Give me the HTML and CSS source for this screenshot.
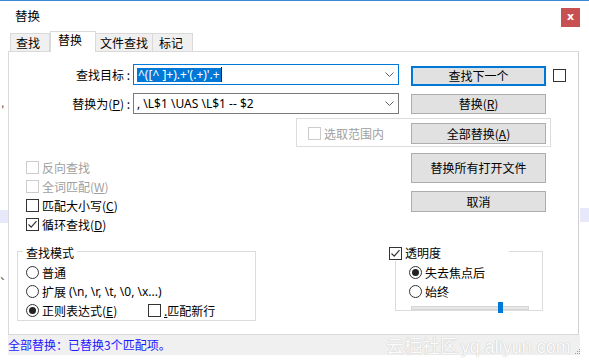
FILE: index.html
```html
<!DOCTYPE html>
<html>
<head>
<meta charset="utf-8">
<title>替换</title>
<link rel="stylesheet" href="styles.css">
</head>
<body>
<div class="bleed comma">,</div>
<div class="bleed dun">、</div>
<div class="bleed hl-left"></div>
<div class="bleed hl-right"></div>

<div class="titlebar">
  <span class="title">替换</span>
  <span class="close">x</span>
</div>

<div class="tabs">
  <div class="tab t1">查找</div>
  <div class="tab t2 active">替换</div>
  <div class="tab t3">文件查找</div>
  <div class="tab t4">标记</div>
</div>

<div class="panel">
  <div class="row r1">
    <label class="lbl">查找目标 :</label>
    <div class="combo focus">
      <span class="sel">^([^ ]+).+'(.+)'.+</span><span class="caret"></span>
      <svg class="chev" width="9" height="5" viewBox="0 0 9 5"><path d="M0.5 0.5 L4.5 4.5 L8.5 0.5" fill="none" stroke="#606060" stroke-width="1"/></svg>
    </div>
    <button class="btn default">查找下一个</button>
    <span class="box cb-right"></span>
  </div>

  <div class="row r2">
    <label class="lbl">替换为(<u>P</u>) :</label>
    <div class="combo">
      <span class="val">, \L$1 \UAS \L$1 -- $2</span>
      <svg class="chev" width="9" height="5" viewBox="0 0 9 5"><path d="M0.5 0.5 L4.5 4.5 L8.5 0.5" fill="none" stroke="#606060" stroke-width="1"/></svg>
    </div>
    <button class="btn">替换(<u>R</u>)</button>
  </div>

  <div class="scope">
    <span class="check disabled"><span class="box"></span>选取范围内</span>
    <button class="btn">全部替换(<u>A</u>)</button>
  </div>

  <div class="middle">
    <div class="opts">
      <div class="check disabled"><span class="box"></span>反向查找</div>
      <div class="check disabled"><span class="box"></span>全词匹配(<u>W</u>)</div>
      <div class="check"><span class="box"></span>匹配大小写(<u>C</u>)</div>
      <div class="check"><span class="box"><svg width="11" height="11" viewBox="0 0 11 11"><path d="M1.5 5.5 L4.2 8.2 L9.5 2.2" fill="none" stroke="#333" stroke-width="1.2"/></svg></span>循环查找(<u>D</u>)</div>
    </div>
    <div class="btns">
      <button class="btn tall">替换所有打开文件</button>
      <button class="btn cancel">取消</button>
    </div>
  </div>

  <div class="bottom">
    <fieldset class="mode">
      <legend>查找模式</legend>
      <div class="radio"><span class="circle"></span>普通</div>
      <div class="radio"><span class="circle"></span>扩展 <span class="lat">(\n, \r, \t, \0, \x...)</span></div>
      <div class="radio-row">
        <div class="radio re"><span class="circle on"></span>正则表达式(<u>E</u>)</div>
        <div class="check"><span class="box"></span><u>.</u> 匹配新行</div>
      </div>
    </fieldset>
    <fieldset class="trans">
      <legend><span class="check"><span class="box"><svg width="11" height="11" viewBox="0 0 11 11"><path d="M1.5 5.5 L4.2 8.2 L9.5 2.2" fill="none" stroke="#333" stroke-width="1.2"/></svg></span>透明度</span></legend>
      <div class="inner">
        <div class="radio"><span class="circle on"></span>失去焦点后</div>
        <div class="radio"><span class="circle"></span>始终</div>
        <div class="slider"><span class="thumb"></span></div>
      </div>
    </fieldset>
  </div>
</div>

<div class="status">全部替换：已替换3个匹配项。</div>

<div class="watermark"><span class="wm-cjk">云栖社区</span> <span class="wm-lat">yq.aliyun.com</span></div>
<svg class="grip" width="6" height="6" viewBox="0 0 6 6">
  <rect x="4" y="0" width="1" height="1" fill="#999"/>
  <rect x="2" y="2" width="1" height="1" fill="#999"/>
  <rect x="4" y="2" width="1" height="1" fill="#999"/>
  <rect x="0" y="4" width="1" height="1" fill="#999"/>
  <rect x="2" y="4" width="1" height="1" fill="#999"/>
  <rect x="4" y="4" width="1" height="1" fill="#999"/>
</svg>
</body>
</html>
```

FILE: styles.css
```css
* { box-sizing: border-box; }
html, body { margin: 0; padding: 0; }
body {
  width: 589px;
  height: 364px;
  background: #fff;
  font-family: "Noto Sans CJK SC", "Noto Sans", sans-serif;
  font-size: 12px;
  color: #000;
  position: relative;
  overflow: hidden;
}
u { text-decoration: underline; text-underline-offset: 1px; }

/* background bleed from window behind */
.bleed { position: absolute; }
.comma { left: 1px; top: 96px; font: 12px/14px "Liberation Sans", sans-serif; color: #444; }
.dun { left: 0px; top: 268px; font: 12px/14px "Noto Sans CJK SC", sans-serif; color: #666; }
.hl-left { left: 0; top: 210px; width: 8px; height: 13px; background: #e8e8fb; }
.hl-right { left: 580px; top: 208px; width: 9px; height: 14px; background: #e8e8fb; }

/* title */
.titlebar {
  height: 31px;
  border-top: 1px solid #3c87d6;
  display: flex;
  align-items: flex-start;
}
.title { margin: 7px 0 0 15px; line-height: 16px; font-size: 12.5px; }
.close {
  margin: 7px 9px 0 auto;
  width: 19px;
  height: 19px;
  background: #c75050;
  color: #fff;
  font: bold 11px/17px "DejaVu Sans", sans-serif;
  text-align: center;
}

/* tabs */
.tabs {
  display: flex;
  align-items: flex-end;
  height: 21px;
  margin-left: 10px;
  margin-bottom: -1px;
  position: relative;
  z-index: 1;
}
.tab {
  height: 18px;
  margin-bottom: 1px;
  padding-left: 5px;
  border: 1px solid #d9d9d9;
  border-bottom: none;
  background: #f0f0f0;
  line-height: 17px;
  white-space: nowrap;
}
.tab + .tab { border-left: none; }
.t1 { width: 40px; }
.t2 { width: 46px; }
.t3 { width: 57px; padding-left: 4px; }
.t4 { width: 40px; padding-left: 6px; }
.tab.active {
  height: 21px;
  margin-bottom: 0;
  background: #fff;
  border-left: 1px solid #d9d9d9;
  padding-left: 7px;
  line-height: 16px;
}
.tab.active + .tab { border-left: none; }

/* panel */
.panel {
  margin-left: 8px;
  width: 571px;
  height: 284px;
  border: 1px solid #d9d9d9;
  border-right-color: #d0d0d0;
  padding-top: 12px;
}
.row { display: flex; align-items: flex-start; height: 21px; }
.r2 { margin-top: 8px; }
.lbl {
  width: 121px;
  text-align: right;
  line-height: 21px;
  white-space: nowrap;
}
.combo {
  margin-left: 3px;
  width: 266px;
  height: 21px;
  border: 1px solid #7a7a7a;
  display: flex;
  align-items: center;
  padding-left: 3px;
  font-family: "Noto Sans", "Noto Sans CJK SC", sans-serif;
  font-size: 12px;
}
.combo.focus { border-color: #0078d7; }
.sel {
  background: #0078d7;
  color: #fff;
  line-height: 14px;
  height: 14px;
  padding: 0 1px;
  white-space: pre;
}
.caret { width: 1px; height: 15px; background: #222; }
.val { white-space: pre; line-height: 14px; }
.chev { margin-left: auto; margin-right: 4px; }

.btn {
  margin: 1px 0 0 12px;
  width: 135px;
  height: 20px;
  padding: 0;
  border: 1px solid #adadad;
  background: #e1e1e1;
  font-family: "Noto Sans CJK SC", "Noto Sans", sans-serif;
  font-size: 12px;
  line-height: 16px;
  color: #000;
  text-align: center;
}
.btn.default { border: 2px solid #0078d7; margin-top: 2px; }
.box {
  width: 13px;
  height: 13px;
  border: 1px solid #333;
  background: #fff;
  display: inline-flex;
  align-items: center;
  justify-content: center;
  flex: none;
}
.cb-right { margin: 5px 0 0 7px; }

/* scope group */
.scope {
  margin: 4px 0 0 287px;
  width: 255px;
  height: 29px;
  border: 1px solid #dcdcdc;
  display: flex;
  align-items: flex-start;
  padding-top: 4px;
}
.scope .check { margin-left: 11px; height: 21px; }
.scope .btn { margin: 0 4px 0 auto; height: 21px; }

.check { display: flex; align-items: center; height: 19px; white-space: nowrap; }
.check .box { margin-right: 3px; }
.check.disabled { color: #a0a0a0; }
.check.disabled .box { border-color: #cccccc; }

/* middle */
.middle { display: flex; align-items: flex-start; }
.opts { width: 402px; padding: 11px 0 0 17px; }
.btns { width: 135px; padding-top: 6px; display: flex; flex-direction: column; }
.btns .btn { margin: 0; }
.btn.tall { height: 30px; }
.btn.cancel { height: 21px; margin-top: 8px; }

/* bottom */
.bottom { display: flex; align-items: flex-start; margin-top: 7px; }
fieldset {
  margin: 0;
  border: 1px solid #dcdcdc;
  min-width: 0;
}
legend {
  padding: 4px 3px 0;
  line-height: 16px;
  font-size: 12px;
}
.mode {
  margin-left: 8px;
  width: 239px;
  padding: 2px 0 0 8px;
}
.mode legend { margin-left: -3px; }
.radio { display: flex; align-items: center; height: 19px; white-space: nowrap; }
.circle {
  width: 13px;
  height: 13px;
  border: 1px solid #333;
  border-radius: 50%;
  margin-right: 3px;
  display: inline-flex;
  align-items: center;
  justify-content: center;
  flex: none;
  background: #fff;
}
.circle.on::after {
  content: "";
  width: 7px;
  height: 7px;
  border-radius: 50%;
  background: #222;
}
.lat { font-family: "Noto Sans", sans-serif; font-size: 12px; margin-left: 3px; }
.radio-row { display: flex; align-items: center; height: 19px; }
.radio.re { width: 122px; }

.trans {
  margin-left: 139px;
  width: 148px;
  padding: 2px 0 0 0;
}
.trans legend {
  margin-left: -7px;
  width: 120px;
  padding: 4px 0 0 0;
}
.trans legend .check { height: 16px; }
.inner { padding-left: 13px; }
.slider {
  position: relative;
  margin: 5px 0 0 2px;
  width: 118px;
  height: 4px;
  background: #e7e7e7;
  border: 1px solid #d6d6d6;
}
.thumb {
  position: absolute;
  left: 86px;
  top: -5px;
  width: 5px;
  height: 11px;
  background: #0078d7;
}

/* status */
.status {
  margin-left: 8px;
  width: 572px;
  height: 20px;
  background: #f0f0f0;
  color: #1a1aff;
  line-height: 20px;
  font-size: 12px;
}

.watermark {
  position: absolute;
  left: 386px;
  top: 335px;
  line-height: 21px;
  color: #fbfbfb;
  text-shadow: 0 0 1px #c8c8c8, 0 0 1px #c8c8c8;
  white-space: nowrap;
}
.wm-cjk { font-family: "Noto Sans CJK SC", sans-serif; font-size: 18px; }
.wm-lat { font-family: "Liberation Sans", sans-serif; font-size: 18px; }
.grip { position: absolute; left: 575px; top: 349px; }
```
